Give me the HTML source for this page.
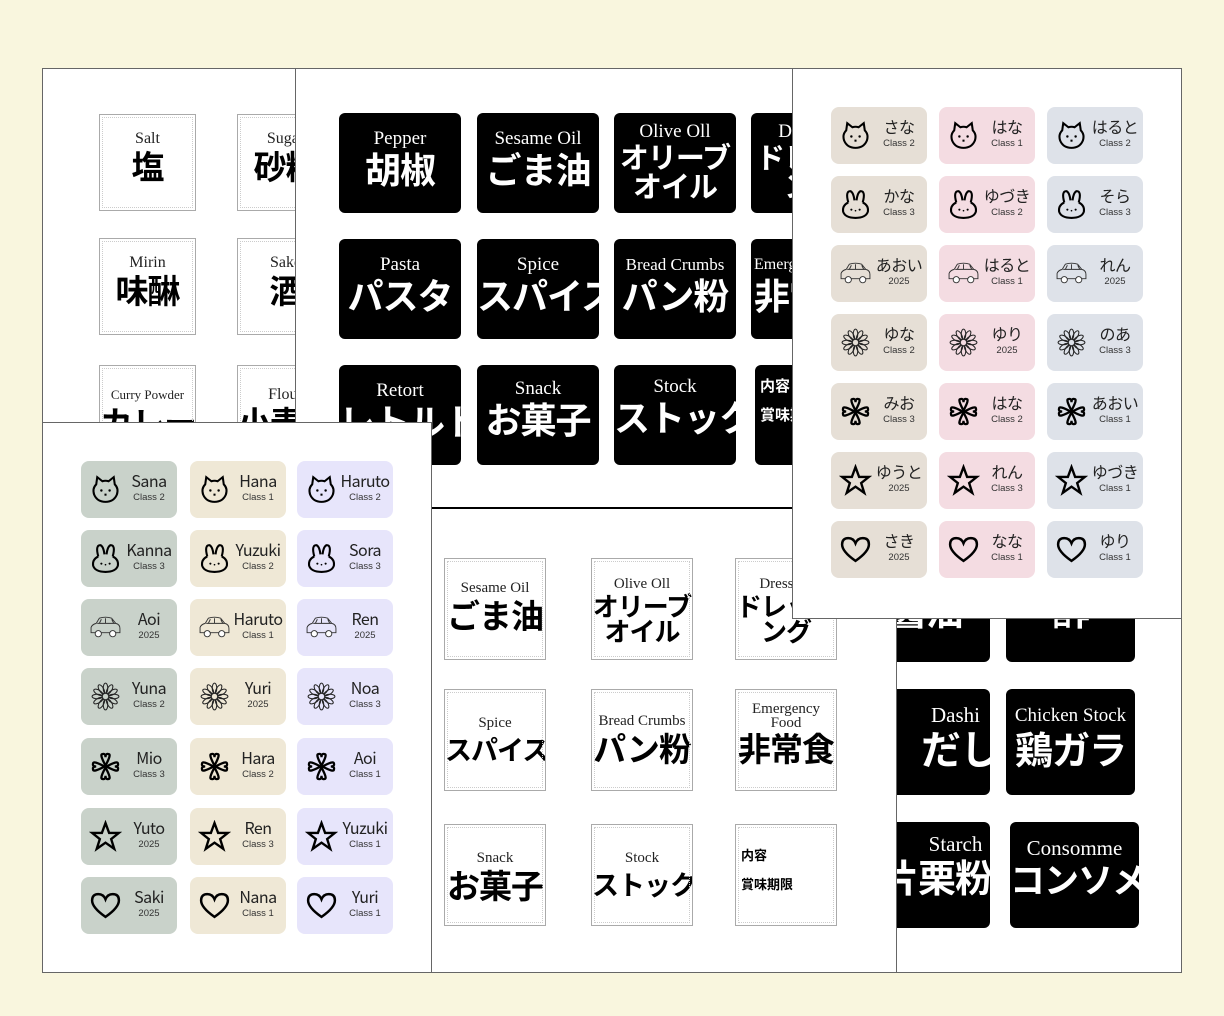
<!DOCTYPE html>
<html><head><meta charset="utf-8">
<style>
*{margin:0;padding:0;box-sizing:border-box}
body{width:1224px;height:1016px;background:#f9f6de;position:relative;overflow:hidden;font-family:"Liberation Sans","Noto Sans CJK JP",sans-serif}
.sh{position:absolute;background:#fff;border:1px solid #666;overflow:hidden}
.bl{position:absolute;background:#000;border-radius:6px;color:#fff;text-align:center;overflow:hidden;white-space:nowrap}
.en{font-family:"Liberation Serif",serif;font-size:19px;line-height:20px}
.jp{font-family:"Noto Sans CJK JP",sans-serif;font-weight:700;font-size:36px;line-height:38px;letter-spacing:-1px}
.fr{position:absolute;background:#fff;border:1px solid #aaa;outline:1px dotted #ccc;outline-offset:-4px;text-align:center;color:#000;white-space:nowrap;overflow:hidden}
.fr .en{font-size:16px;line-height:18px;color:#222}
.fr .jp{font-size:33px;line-height:34px}
.nl{position:absolute;width:96px;height:57px;border-radius:8px}
.nl svg{position:absolute;left:8px;top:12px;width:33px;height:33px}
.nl .n{position:absolute;left:40px;width:56px;top:10px;text-align:center;font-family:"Noto Sans CJK JP",sans-serif;font-size:16px;line-height:19px;color:#222;letter-spacing:-0.5px;white-space:nowrap}
.nl .c{position:absolute;left:40px;width:56px;top:31px;text-align:center;font-size:9.5px;color:#333;font-family:"Liberation Sans",sans-serif}
.g{background:#c9d2ca}.b{background:#efe8d6}.v{background:#e7e5fb}
.t{background:#e6dfd6}.p{background:#f4dce2}.s{background:#dee2e9}
</style></head><body>
<svg width="0" height="0" style="position:absolute">
<defs>
<symbol id="bear" viewBox="0 0 32 32"><path d="M7 11 L8 4 L13 8 Q16 7 19 8 L24 4 L25 11 Q29 15 27 21 Q24 28 16 28 Q8 28 5 21 Q3 15 7 11Z" fill="none" stroke="#000" stroke-width="2"/><circle cx="12" cy="17" r="1.2"/><circle cx="20" cy="17" r="1.2"/><path d="M15 20h2v2h-2z"/></symbol>
<symbol id="rab" viewBox="0 0 32 32"><path d="M9 14 Q6 3 11 3 Q14 4 15 12 M17 12 Q18 4 21 3 Q26 3 23 14 M9 14 Q3 17 4 23 Q6 29 16 29 Q26 29 28 23 Q29 17 23 14" fill="none" stroke="#000" stroke-width="2"/><circle cx="12" cy="21" r="1"/><circle cx="20" cy="21" r="1"/><circle cx="16" cy="22" r="0.8"/></symbol>
<symbol id="car" viewBox="0 0 32 32"><path d="M2 21 L2 16 Q3 13 7 12 L10 7 Q16 5 22 7 L26 12 Q30 13 30 17 L30 21 Z M10 12 L12 8 M16 7 L16 12 M22 8 L24 12 M8 12 H26" fill="none" stroke="#333" stroke-width="0.9"/><circle cx="9" cy="22" r="3" fill="#fff" stroke="#333" stroke-width="0.9"/><circle cx="23" cy="22" r="3" fill="#fff" stroke="#333" stroke-width="0.9"/></symbol>
<symbol id="flw" viewBox="0 0 32 32"><g fill="none" stroke="#222" stroke-width="1"><circle cx="16" cy="16" r="3.5"/><ellipse cx="16" cy="8" rx="2.2" ry="5"/><ellipse cx="16" cy="8" rx="2.2" ry="5" transform="rotate(30 16 16)"/><ellipse cx="16" cy="8" rx="2.2" ry="5" transform="rotate(60 16 16)"/><ellipse cx="16" cy="8" rx="2.2" ry="5" transform="rotate(90 16 16)"/><ellipse cx="16" cy="8" rx="2.2" ry="5" transform="rotate(120 16 16)"/><ellipse cx="16" cy="8" rx="2.2" ry="5" transform="rotate(150 16 16)"/><ellipse cx="16" cy="8" rx="2.2" ry="5" transform="rotate(180 16 16)"/><ellipse cx="16" cy="8" rx="2.2" ry="5" transform="rotate(210 16 16)"/><ellipse cx="16" cy="8" rx="2.2" ry="5" transform="rotate(240 16 16)"/><ellipse cx="16" cy="8" rx="2.2" ry="5" transform="rotate(270 16 16)"/><ellipse cx="16" cy="8" rx="2.2" ry="5" transform="rotate(300 16 16)"/><ellipse cx="16" cy="8" rx="2.2" ry="5" transform="rotate(330 16 16)"/></g></symbol>
<symbol id="clv" viewBox="0 0 32 32"><g fill="none" stroke="#000" stroke-width="2.2"><path d="M16 15 Q10 4 13 4 Q16 3 16 7 Q16 3 19 4 Q22 4 16 15Z"/><path d="M16 15 Q10 4 13 4 Q16 3 16 7 Q16 3 19 4 Q22 4 16 15Z" transform="rotate(90 16 16)"/><path d="M16 15 Q10 4 13 4 Q16 3 16 7 Q16 3 19 4 Q22 4 16 15Z" transform="rotate(180 16 16)"/><path d="M16 15 Q10 4 13 4 Q16 3 16 7 Q16 3 19 4 Q22 4 16 15Z" transform="rotate(270 16 16)"/></g></symbol>
<symbol id="star" viewBox="0 0 32 32"><path d="M16 3 L19.5 12.5 L29 12.5 L21.5 18.5 L24.5 28 L16 22 L7.5 28 L10.5 18.5 L3 12.5 L12.5 12.5Z" fill="none" stroke="#000" stroke-width="2.3" stroke-linejoin="miter"/></symbol>
<symbol id="hrt" viewBox="0 0 32 32"><path d="M16 27 Q3 18 3 11 Q3 5 9 5 Q14 5 16 10 Q18 5 23 5 Q29 5 29 11 Q29 18 16 27Z" fill="none" stroke="#000" stroke-width="2.4"/></symbol>
</defs></svg>

<!-- Sheet A -->
<div class="sh" style="left:42px;top:68px;width:420px;height:380px">
 <div class="fr" style="left:56px;top:45px;width:97px;height:97px"><div class="en" style="margin-top:15px">Salt</div><div class="jp">塩</div></div>
 <div class="fr" style="left:194px;top:45px;width:97px;height:97px"><div class="en" style="margin-top:15px">Sugar</div><div class="jp">砂糖</div></div>
 <div class="fr" style="left:56px;top:169px;width:97px;height:97px"><div class="en" style="margin-top:15px">Mirin</div><div class="jp">味醂</div></div>
 <div class="fr" style="left:194px;top:169px;width:97px;height:97px"><div class="en" style="margin-top:15px">Sake</div><div class="jp">酒</div></div>
 <div class="fr" style="left:56px;top:296px;width:97px;height:97px"><div class="en" style="margin-top:20px;font-size:13px">Curry Powder</div><div class="jp">カレー粉</div></div>
 <div class="fr" style="left:194px;top:296px;width:97px;height:97px"><div class="en" style="margin-top:20px">Flour</div><div class="jp">小麦粉</div></div>
</div>

<!-- Sheet B -->
<div class="sh" style="left:295px;top:68px;width:600px;height:441px">
 <div class="bl" style="left:43px;top:44px;width:122px;height:100px"><div class="en" style="margin-top:16px">Pepper</div><div class="jp">胡椒</div></div>
 <div class="bl" style="left:181px;top:44px;width:122px;height:100px"><div class="en" style="margin-top:16px">Sesame Oil</div><div class="jp">ごま油</div></div>
 <div class="bl" style="left:318px;top:44px;width:122px;height:100px"><div class="en" style="margin-top:9px">Olive Oll</div><div class="jp" style="font-size:29px;line-height:29px">オリーブ<br>オイル</div></div>
 <div class="bl" style="left:455px;top:44px;width:122px;height:100px"><div class="en" style="margin-top:9px">Dressing</div><div class="jp" style="font-size:29px;line-height:29px">ドレッシ<br>ング</div></div>
 <div class="bl" style="left:43px;top:170px;width:122px;height:100px"><div class="en" style="margin-top:16px">Pasta</div><div class="jp">パスタ</div></div>
 <div class="bl" style="left:181px;top:170px;width:122px;height:100px"><div class="en" style="margin-top:16px">Spice</div><div class="jp">スパイス</div></div>
 <div class="bl" style="left:318px;top:170px;width:122px;height:100px"><div class="en" style="margin-top:16px;font-size:17px">Bread Crumbs</div><div class="jp">パン粉</div></div>
 <div class="bl" style="left:455px;top:170px;width:122px;height:100px"><div class="en" style="margin-top:16px;font-size:16px;text-align:left;padding-left:3px">Emergency Food</div><div class="jp" style="text-align:left;padding-left:3px">非常食</div></div>
 <div class="bl" style="left:43px;top:296px;width:122px;height:100px"><div class="en" style="margin-top:16px">Retort</div><div class="jp">レトルト</div></div>
 <div class="bl" style="left:181px;top:296px;width:122px;height:100px"><div class="en" style="margin-top:14px">Snack</div><div class="jp">お菓子</div></div>
 <div class="bl" style="left:318px;top:296px;width:122px;height:100px"><div class="en" style="margin-top:12px">Stock</div><div class="jp">ストック</div></div>
 <div class="bl" style="left:459px;top:296px;width:122px;height:100px;text-align:left;padding-left:5px;font-weight:700;font-size:15px;font-family:'Noto Sans CJK JP',sans-serif"><div style="margin-top:10px">内容</div><div style="margin-top:8px">賞味期限</div></div>
</div>

<!-- Sheet F -->
<div class="sh" style="left:840px;top:420px;width:342px;height:553px">
 <div class="bl" style="left:20px;top:138px;width:129px;height:103px"><div class="en" style="margin-top:10px">Soy Sauce</div><div class="jp" style="font-size:38px;line-height:40px">醤油</div></div>
 <div class="bl" style="left:165px;top:138px;width:129px;height:103px"><div class="en" style="margin-top:10px">Vinegar</div><div class="jp" style="font-size:38px;line-height:40px">酢</div></div>
 <div class="bl" style="left:20px;top:268px;width:129px;height:106px"><div class="en" style="margin-top:16px;font-size:21px;padding-left:60px">Dashi</div><div class="jp" style="font-size:40px;line-height:44px;padding-left:60px">だし</div></div>
 <div class="bl" style="left:165px;top:268px;width:129px;height:106px"><div class="en" style="margin-top:17px;font-size:19px">Chicken Stock</div><div class="jp" style="font-size:38px;line-height:44px">鶏ガラ</div></div>
 <div class="bl" style="left:20px;top:401px;width:129px;height:106px"><div class="en" style="margin-top:12px;font-size:21px;padding-left:60px">Starch</div><div class="jp" style="font-size:38px;line-height:44px;padding-left:20px">片栗粉</div></div>
 <div class="bl" style="left:169px;top:401px;width:129px;height:106px"><div class="en" style="margin-top:16px;font-size:21px">Consomme</div><div class="jp" style="font-size:35px;line-height:42px">コンソメ</div></div>
</div>

<!-- Sheet E -->
<div class="sh" style="left:431px;top:507px;width:466px;height:466px;border-top:2px solid #000">
 <div class="fr" style="left:12px;top:49px;width:102px;height:102px"><div class="en" style="margin-top:20px;font-size:15px">Sesame Oil</div><div class="jp">ごま油</div></div>
 <div class="fr" style="left:159px;top:49px;width:102px;height:102px"><div class="en" style="margin-top:16px;font-size:15px">Olive Oll</div><div class="jp" style="font-size:26px;line-height:25px">オリーブ<br>オイル</div></div>
 <div class="fr" style="left:303px;top:49px;width:102px;height:102px"><div class="en" style="margin-top:16px;font-size:15px">Dressing</div><div class="jp" style="font-size:26px;line-height:25px">ドレッシ<br>ング</div></div>
 <div class="fr" style="left:12px;top:180px;width:102px;height:102px"><div class="en" style="margin-top:24px;font-size:15px">Spice</div><div class="jp" style="font-size:27px">スパイス</div></div>
 <div class="fr" style="left:159px;top:180px;width:102px;height:102px"><div class="en" style="margin-top:22px;font-size:15px">Bread Crumbs</div><div class="jp">パン粉</div></div>
 <div class="fr" style="left:303px;top:180px;width:102px;height:102px"><div class="en" style="margin-top:12px;font-size:15px;line-height:14px">Emergency<br>Food</div><div class="jp">非常食</div></div>
 <div class="fr" style="left:12px;top:315px;width:102px;height:102px"><div class="en" style="margin-top:24px;font-size:15px">Snack</div><div class="jp">お菓子</div></div>
 <div class="fr" style="left:159px;top:315px;width:102px;height:102px"><div class="en" style="margin-top:24px;font-size:15px">Stock</div><div class="jp" style="font-size:27px">ストック</div></div>
 <div class="fr" style="left:303px;top:315px;width:102px;height:102px;text-align:left;padding-left:5px;font-weight:700;font-size:13px;font-family:'Noto Sans CJK JP',sans-serif"><div style="margin-top:20px">内容</div><div style="margin-top:10px">賞味期限</div></div>
</div>

<!-- Sheet D -->
<div class="sh" style="left:42px;top:422px;width:390px;height:551px">
 <div class="nl g" style="left:38px;top:38px"><svg><use href="#bear"/></svg><div class="n">Sana</div><div class="c">Class 2</div></div>
 <div class="nl b" style="left:147px;top:38px"><svg><use href="#bear"/></svg><div class="n">Hana</div><div class="c">Class 1</div></div>
 <div class="nl v" style="left:254px;top:38px"><svg><use href="#bear"/></svg><div class="n">Haruto</div><div class="c">Class 2</div></div>
 <div class="nl g" style="left:38px;top:107px"><svg><use href="#rab"/></svg><div class="n">Kanna</div><div class="c">Class 3</div></div>
 <div class="nl b" style="left:147px;top:107px"><svg><use href="#rab"/></svg><div class="n">Yuzuki</div><div class="c">Class 2</div></div>
 <div class="nl v" style="left:254px;top:107px"><svg><use href="#rab"/></svg><div class="n">Sora</div><div class="c">Class 3</div></div>
 <div class="nl g" style="left:38px;top:176px"><svg><use href="#car"/></svg><div class="n">Aoi</div><div class="c">2025</div></div>
 <div class="nl b" style="left:147px;top:176px"><svg><use href="#car"/></svg><div class="n">Haruto</div><div class="c">Class 1</div></div>
 <div class="nl v" style="left:254px;top:176px"><svg><use href="#car"/></svg><div class="n">Ren</div><div class="c">2025</div></div>
 <div class="nl g" style="left:38px;top:245px"><svg><use href="#flw"/></svg><div class="n">Yuna</div><div class="c">Class 2</div></div>
 <div class="nl b" style="left:147px;top:245px"><svg><use href="#flw"/></svg><div class="n">Yuri</div><div class="c">2025</div></div>
 <div class="nl v" style="left:254px;top:245px"><svg><use href="#flw"/></svg><div class="n">Noa</div><div class="c">Class 3</div></div>
 <div class="nl g" style="left:38px;top:315px"><svg><use href="#clv"/></svg><div class="n">Mio</div><div class="c">Class 3</div></div>
 <div class="nl b" style="left:147px;top:315px"><svg><use href="#clv"/></svg><div class="n">Hara</div><div class="c">Class 2</div></div>
 <div class="nl v" style="left:254px;top:315px"><svg><use href="#clv"/></svg><div class="n">Aoi</div><div class="c">Class 1</div></div>
 <div class="nl g" style="left:38px;top:385px"><svg><use href="#star"/></svg><div class="n">Yuto</div><div class="c">2025</div></div>
 <div class="nl b" style="left:147px;top:385px"><svg><use href="#star"/></svg><div class="n">Ren</div><div class="c">Class 3</div></div>
 <div class="nl v" style="left:254px;top:385px"><svg><use href="#star"/></svg><div class="n">Yuzuki</div><div class="c">Class 1</div></div>
 <div class="nl g" style="left:38px;top:454px"><svg><use href="#hrt"/></svg><div class="n">Saki</div><div class="c">2025</div></div>
 <div class="nl b" style="left:147px;top:454px"><svg><use href="#hrt"/></svg><div class="n">Nana</div><div class="c">Class 1</div></div>
 <div class="nl v" style="left:254px;top:454px"><svg><use href="#hrt"/></svg><div class="n">Yuri</div><div class="c">Class 1</div></div>
</div>

<!-- Sheet C -->
<div class="sh" style="left:792px;top:68px;width:390px;height:551px">
 <div class="nl t" style="left:38px;top:38px"><svg><use href="#bear"/></svg><div class="n">さな</div><div class="c">Class 2</div></div>
 <div class="nl p" style="left:146px;top:38px"><svg><use href="#bear"/></svg><div class="n">はな</div><div class="c">Class 1</div></div>
 <div class="nl s" style="left:254px;top:38px"><svg><use href="#bear"/></svg><div class="n">はると</div><div class="c">Class 2</div></div>
 <div class="nl t" style="left:38px;top:107px"><svg><use href="#rab"/></svg><div class="n">かな</div><div class="c">Class 3</div></div>
 <div class="nl p" style="left:146px;top:107px"><svg><use href="#rab"/></svg><div class="n">ゆづき</div><div class="c">Class 2</div></div>
 <div class="nl s" style="left:254px;top:107px"><svg><use href="#rab"/></svg><div class="n">そら</div><div class="c">Class 3</div></div>
 <div class="nl t" style="left:38px;top:176px"><svg><use href="#car"/></svg><div class="n">あおい</div><div class="c">2025</div></div>
 <div class="nl p" style="left:146px;top:176px"><svg><use href="#car"/></svg><div class="n">はると</div><div class="c">Class 1</div></div>
 <div class="nl s" style="left:254px;top:176px"><svg><use href="#car"/></svg><div class="n">れん</div><div class="c">2025</div></div>
 <div class="nl t" style="left:38px;top:245px"><svg><use href="#flw"/></svg><div class="n">ゆな</div><div class="c">Class 2</div></div>
 <div class="nl p" style="left:146px;top:245px"><svg><use href="#flw"/></svg><div class="n">ゆり</div><div class="c">2025</div></div>
 <div class="nl s" style="left:254px;top:245px"><svg><use href="#flw"/></svg><div class="n">のあ</div><div class="c">Class 3</div></div>
 <div class="nl t" style="left:38px;top:314px"><svg><use href="#clv"/></svg><div class="n">みお</div><div class="c">Class 3</div></div>
 <div class="nl p" style="left:146px;top:314px"><svg><use href="#clv"/></svg><div class="n">はな</div><div class="c">Class 2</div></div>
 <div class="nl s" style="left:254px;top:314px"><svg><use href="#clv"/></svg><div class="n">あおい</div><div class="c">Class 1</div></div>
 <div class="nl t" style="left:38px;top:383px"><svg><use href="#star"/></svg><div class="n">ゆうと</div><div class="c">2025</div></div>
 <div class="nl p" style="left:146px;top:383px"><svg><use href="#star"/></svg><div class="n">れん</div><div class="c">Class 3</div></div>
 <div class="nl s" style="left:254px;top:383px"><svg><use href="#star"/></svg><div class="n">ゆづき</div><div class="c">Class 1</div></div>
 <div class="nl t" style="left:38px;top:452px"><svg><use href="#hrt"/></svg><div class="n">さき</div><div class="c">2025</div></div>
 <div class="nl p" style="left:146px;top:452px"><svg><use href="#hrt"/></svg><div class="n">なな</div><div class="c">Class 1</div></div>
 <div class="nl s" style="left:254px;top:452px"><svg><use href="#hrt"/></svg><div class="n">ゆり</div><div class="c">Class 1</div></div>
</div>
</body></html>
